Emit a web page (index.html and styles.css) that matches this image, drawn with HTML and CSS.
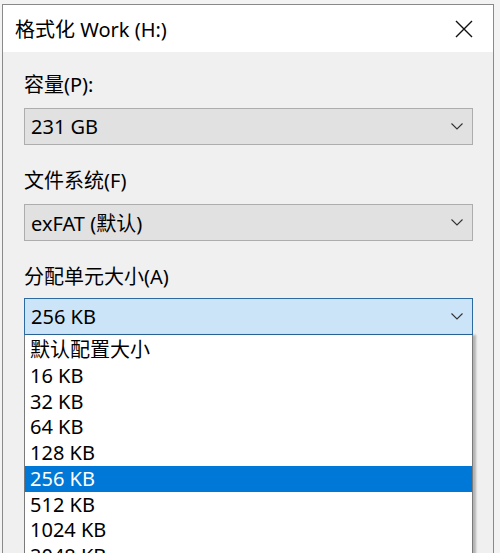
FILE: index.html
```html
<!DOCTYPE html>
<html lang="zh-CN">
<head>
<meta charset="utf-8">
<title>格式化 Work (H:)</title>
<link rel="stylesheet" href="styles.css">
</head>
<body>
<div class="window">
  <div class="titlebar">
    <span class="title">格式化 Work (H:)</span>
    <svg class="close" width="18" height="18" viewBox="0 0 18 18"><path d="M1 1 L17 17 M17 1 L1 17" stroke="#111" stroke-width="1.4" fill="none"/></svg>
  </div>
  <div class="content">
    <div class="group">
      <div class="label">容量(P):</div>
      <div class="combo"><span>231 GB</span><svg class="chev" width="12" height="7" viewBox="0 0 12 7"><path d="M0.5 0.5 L6 6 L11.5 0.5" stroke="#333" stroke-width="1.1" fill="none"/></svg></div>
    </div>
    <div class="group">
      <div class="label">文件系统(F)</div>
      <div class="combo"><span>exFAT (默认)</span><svg class="chev" width="12" height="7" viewBox="0 0 12 7"><path d="M0.5 0.5 L6 6 L11.5 0.5" stroke="#333" stroke-width="1.1" fill="none"/></svg></div>
    </div>
    <div class="group last">
      <div class="label">分配单元大小(A)</div>
      <div class="dropwrap">
        <div class="combo focused"><span>256 KB</span><svg class="chev" width="12" height="7" viewBox="0 0 12 7"><path d="M0.5 0.5 L6 6 L11.5 0.5" stroke="#333" stroke-width="1.1" fill="none"/></svg></div>
        <ul class="list">
          <li>默认配置大小</li>
          <li>16 KB</li>
          <li>32 KB</li>
          <li>64 KB</li>
          <li>128 KB</li>
          <li class="sel">256 KB</li>
          <li>512 KB</li>
          <li>1024 KB</li>
          <li>2048 KB</li>
        </ul>
      </div>
    </div>
  </div>
</div>
</body>
</html>
```
FILE: styles.css
```css
html, body {
  margin: 0;
  padding: 0;
}
body {
  width: 500px;
  height: 553px;
  overflow: hidden;
  background: #f3f3f3;
  font-family: "Noto Sans", "Noto Sans CJK SC", sans-serif;
  color: #000;
}
.window {
  margin: 4px 0 0 2px;
  width: 490px;
  height: 560px;
  border: 1px solid #8a8a8a;
  border-bottom: none;
  background: #f0f0f0;
}
.titlebar {
  height: 47px;
  background: #fff;
  display: flex;
  align-items: center;
  justify-content: space-between;
  padding: 0 20px 0 12px;
}
.title {
  font-size: 20px;
  line-height: 26px;
  margin-top: 2px;
}
.close {
  margin-top: 1px;
  margin-right: 0;
}
.content {
  padding: 20px 20px 0 21px;
}
.group {
  margin-bottom: 23px;
}
.label {
  font-size: 20px;
  line-height: 26px;
  height: 26px;
}
.combo {
  margin-top: 10px;
  height: 37px;
  box-sizing: border-box;
  border: 1px solid #adadad;
  background: #e1e1e1;
  display: flex;
  align-items: center;
  justify-content: space-between;
  padding: 0 9px 0 6px;
  font-size: 20px;
}
.combo.focused {
  background: #cce4f7;
  border-color: #2c6aa0;
}
.group.last .combo {
  margin-top: 8px;
}
.dropwrap {
  position: relative;
}
.list {
  position: absolute;
  left: 0;
  right: 0;
  top: 37px;
  margin: 0;
  padding: 2px 0 0;
  list-style: none;
  background: #fff;
  border: 1px solid #7a7a7a;
  border-top: none;
  box-shadow: 3px 0 2px rgba(0, 0, 0, 0.25);
  height: 240px;
}
.list li {
  height: 25.75px;
  line-height: 25px;
  padding-left: 5px;
  font-size: 20px;
}
.list li.sel {
  background: #0078d7;
  color: #fff;
}
```
